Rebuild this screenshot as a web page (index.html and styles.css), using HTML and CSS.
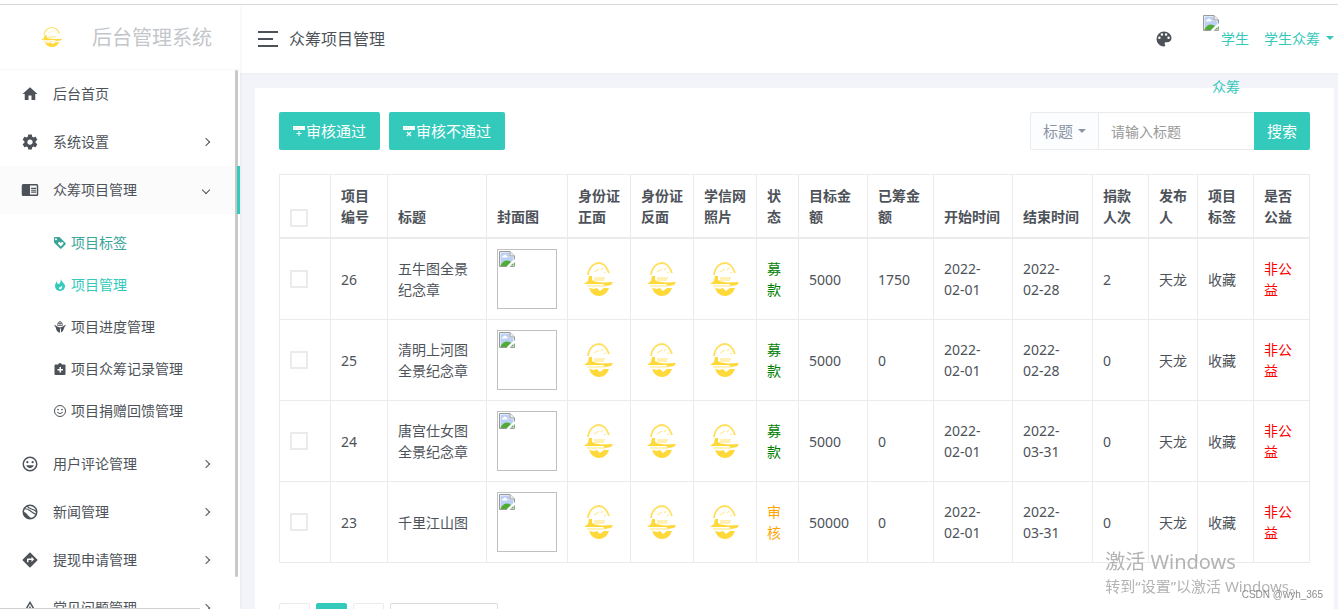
FILE: index.html
```html
<!DOCTYPE html>
<html lang="zh-CN">
<head>
<meta charset="utf-8">
<title>后台管理系统</title>
<link rel="stylesheet" href="styles.css">
</head>
<body>
<svg class="sprite" aria-hidden="true">
  <symbol id="i-home" viewBox="0 0 24 24"><path d="M10,20V14H14V20H19V12H22L12,3L2,12H5V20H10Z"/></symbol>
  <symbol id="i-cog" viewBox="0 0 24 24"><path d="M12,15.5A3.5,3.5 0 0,1 8.5,12A3.5,3.5 0 0,1 12,8.5A3.5,3.5 0 0,1 15.5,12A3.5,3.5 0 0,1 12,15.5M19.43,12.97C19.47,12.65 19.5,12.33 19.5,12C19.5,11.67 19.47,11.34 19.43,11L21.54,9.37C21.73,9.22 21.78,8.95 21.66,8.73L19.66,5.27C19.54,5.05 19.27,4.96 19.05,5.05L16.56,6.05C16.04,5.66 15.5,5.32 14.87,5.07L14.5,2.42C14.46,2.18 14.25,2 14,2H10C9.75,2 9.54,2.18 9.5,2.42L9.13,5.07C8.5,5.32 7.96,5.66 7.44,6.05L4.95,5.05C4.73,4.96 4.46,5.05 4.34,5.27L2.34,8.73C2.21,8.95 2.27,9.22 2.46,9.37L4.57,11C4.53,11.34 4.5,11.67 4.5,12C4.5,12.33 4.53,12.65 4.57,12.97L2.46,14.63C2.27,14.78 2.21,15.05 2.34,15.27L4.34,18.73C4.46,18.95 4.73,19.03 4.95,18.95L7.44,17.94C7.96,18.34 8.5,18.68 9.13,18.93L9.5,21.58C9.54,21.82 9.75,22 10,22H14C14.25,22 14.46,21.82 14.5,21.58L14.87,18.93C15.5,18.67 16.04,18.34 16.56,17.94L19.05,18.95C19.27,19.03 19.54,18.95 19.66,18.73L21.66,15.27C21.78,15.05 21.73,14.78 21.54,14.63L19.43,12.97Z"/></symbol>
  <symbol id="i-reader" viewBox="0 0 24 24"><path fill-rule="evenodd" d="M3,4H21A2,2 0 0,1 23,6V18A2,2 0 0,1 21,20H3A2,2 0 0,1 1,18V6A2,2 0 0,1 3,4M12,6V18H21V6H12M13.5,9H20V10.500H13.5V9M13.500,11.500H20V13H13.500V11.500M13.500,14H20V15.500H13.500V14"/></symbol>
  <symbol id="i-smile" viewBox="0 0 24 24"><circle cx="12" cy="12" r="9" fill="none" stroke="currentColor" stroke-width="2"/><circle cx="8.500" cy="9.500" r="1.500"/><circle cx="15.500" cy="9.500" r="1.500"/><path d="M7,13.800H17C16.200,16 14.300,17.500 12,17.500S7.800,16 7,13.800Z"/></symbol>
  <symbol id="i-smile-thin" viewBox="0 0 24 24"><circle cx="12" cy="12" r="11" fill="none" stroke="currentColor" stroke-width="2"/><circle cx="8" cy="9" r="1.700"/><circle cx="16" cy="9" r="1.700"/><path d="M6.500,14.500Q12,20 17.500,14.500" fill="none" stroke="currentColor" stroke-width="2"/></symbol>
  <symbol id="i-earth" viewBox="0 0 24 24"><circle cx="12" cy="12" r="9" fill="none" stroke="currentColor" stroke-width="2"/><path d="M4,8C10,6 12,12 20,15M8,4C11,9 16,7 21,12" fill="none" stroke="currentColor" stroke-width="1.500"/><path d="M3,12C7,11 9,18 14,20C8,22 3,18 3,12Z"/></symbol>
  <symbol id="i-direction" viewBox="0 0 24 24"><path d="M14,14.5V12H10V15H8V11A1,1 0 0,1 9,10H14V7.5L17.5,11M21.71,11.29L12.71,2.29H12.7C12.31,1.9 11.68,1.9 11.29,2.29L2.29,11.29C1.9,11.68 1.9,12.32 2.29,12.71L11.29,21.71C11.68,22.09 12.31,22.1 12.71,21.71L21.71,12.71C22.1,12.32 22.1,11.68 21.71,11.29Z"/></symbol>
  <symbol id="i-alert" viewBox="0 0 24 24"><path d="M12,4.500L21,20H3ZM12,10V15" fill="none" stroke="currentColor" stroke-width="2"/></symbol>
  <symbol id="i-tag" viewBox="0 0 24 24"><path fill-rule="evenodd" d="M2,0H11L23,12Q24,13.500 23,15L15,23Q13.500,24 12,23L0,11V2Q0,0 2,0M4,2.500A2,2 0 1,0 4,6.500A2,2 0 1,0 4,2.500M13.500,19L18.500,14Q20,11 17,10Q15,9.500 13.500,12Q12,9.500 10,10Q7,11 8.500,14Z"/></symbol>
  <symbol id="i-fire" viewBox="0 0 24 24"><path fill-rule="evenodd" d="M14,0Q15,4 18,7Q22,11 22,15Q21,23 12,24Q3,23 2,15Q2,9 6,4Q5.500,10 9,10Q13,10 14,0M12,21Q17,20 16.500,13Q14,16 11,16.500Q8,18 12,21"/></symbol>
  <symbol id="i-progress" viewBox="0 0 24 24"><path d="M7,9Q7,1 12,1T17,9M12,1V10M8,5H16M7,9H17" fill="none" stroke="currentColor" stroke-width="1.500"/><path d="M0,8Q5,8 6,11L12,13L18,11Q19,8 24,8Q20,12 20,15Q19,20 14,23V16L12,14V23.500Q5,22 4,15Q4,12 0,8Z"/></symbol>
  <symbol id="i-record" viewBox="0 0 24 24"><path fill-rule="evenodd" d="M3,3H8Q9,0 12,0T16,3H21Q23,3 23,5V22Q23,24 21,24H3Q1,24 1,22V5Q1,3 3,3M11,8V12H7V15H11V19H14V15H18V12H14V8Z"/></symbol>
  <symbol id="i-palette" viewBox="0 0 24 24"><path d="M17.5,12A1.5,1.5 0 0,1 16,10.5A1.5,1.5 0 0,1 17.5,9A1.5,1.5 0 0,1 19,10.5A1.5,1.5 0 0,1 17.5,12M14.5,8A1.5,1.5 0 0,1 13,6.5A1.5,1.5 0 0,1 14.5,5A1.5,1.5 0 0,1 16,6.5A1.5,1.5 0 0,1 14.5,8M9.5,8A1.5,1.5 0 0,1 8,6.5A1.5,1.5 0 0,1 9.5,5A1.5,1.5 0 0,1 11,6.5A1.5,1.5 0 0,1 9.5,8M6.5,12A1.5,1.5 0 0,1 5,10.5A1.5,1.5 0 0,1 6.5,9A1.5,1.5 0 0,1 8,10.5A1.5,1.5 0 0,1 6.5,12M12,3A9,9 0 0,0 3,12A9,9 0 0,0 12,21A1.5,1.5 0 0,0 13.5,19.5C13.5,19.11 13.35,18.76 13.11,18.5C12.88,18.23 12.73,17.88 12.73,17.5A1.5,1.5 0 0,1 14.23,16H16A5,5 0 0,0 21,11C21,6.58 16.97,3 12,3Z"/></symbol>
  <symbol id="i-pass" viewBox="0 0 12 12"><path d="M0,1H12V5H0ZM5.500,6H6.500V8H8.500V9H6.500V11H5.500V9H3.500V8H5.500Z"/><path d="M2,3H7" stroke="#33cabb" stroke-width="1" stroke-dasharray="1 1" opacity=".4"/></symbol>
  <symbol id="i-reject" viewBox="0 0 12 12"><path d="M0,1H12V5H0Z"/><path d="M2,3H7" stroke="#33cabb" stroke-width="1" stroke-dasharray="1 1" opacity=".4"/><path d="M4,7L8,11M8,7L4,11" stroke="currentColor" stroke-width="1.300"/></symbol>
  <symbol id="i-broken" viewBox="0 0 16 16"><path d="M.5,.5H11L15.500,5V15.500H.5Z" fill="#fff" stroke="#9a9a9a"/><path d="M1.500,1.500H10.500V6H14.500V9L8,14.500H1.500Z" fill="#bcd0f5"/><path d="M3,6Q3,4.500 4.500,4.500Q6,2.500 7.500,4.500Q9,5 8.500,6.500H3Z" fill="#fff"/><path d="M1.500,14.500Q4,9.500 8,9.500Q10.500,9.500 12,11L8,15H1.500Z" fill="#51ab35"/><path d="M11,.5V5H15.500" fill="#eee" stroke="#9a9a9a"/><path d="M16,8L7.500,16H10.500L16,11Z" fill="#fff"/><path d="M11.500,14.500H14.500V12Z" fill="#51ab35"/></symbol>
  <symbol id="i-emblem" viewBox="0 0 30 34" preserveAspectRatio="none"><g fill="none" stroke="#ffdf5c"><path d="M4,13C5,4 11,1 15,1S23,5 25,11" stroke-width="1.800"/><path d="M10,10L15,7M17,8L19,6M20,11L22,10" stroke-width="1.200" opacity=".6"/><path d="M10,16H21M10,18H20" stroke-width="1.500" opacity=".6"/><path d="M3,24H21" stroke-width="1.200" opacity=".7"/></g><g fill="#ffd83a"><path d="M5,14H8V18L11,19.500L18,20.500L29,20L27,23L21,24L19,22L0,22L4,19Z"/><path d="M5,26L10,27L13,26L16,29L20,26H25Q22,34 15,34Q8,34 5,26Z"/></g></symbol>
</svg>

<div class="app">
  <aside class="sidebar">
    <a class="brand" href="#"><svg class="brand-logo"><use href="#i-emblem"/></svg><span>后台管理系统</span></a>
    <nav class="nav">
      <a class="nav-item" href="#"><svg class="icon"><use href="#i-home"/></svg>后台首页</a>
      <a class="nav-item has-sub" href="#"><svg class="icon"><use href="#i-cog"/></svg>系统设置</a>
      <a class="nav-item has-sub open" href="#"><svg class="icon"><use href="#i-reader"/></svg>众筹项目管理</a>
      <div class="subnav">
        <a class="hovered" href="#"><svg class="icon-sm"><use href="#i-tag"/></svg>项目标签</a>
        <a class="current" href="#"><svg class="icon-sm"><use href="#i-fire"/></svg>项目管理</a>
        <a href="#"><svg class="icon-sm"><use href="#i-progress"/></svg>项目进度管理</a>
        <a href="#"><svg class="icon-sm"><use href="#i-record"/></svg>项目众筹记录管理</a>
        <a href="#"><svg class="icon-sm"><use href="#i-smile-thin"/></svg>项目捐赠回馈管理</a>
      </div>
      <a class="nav-item has-sub" href="#"><svg class="icon"><use href="#i-smile"/></svg>用户评论管理</a>
      <a class="nav-item has-sub" href="#"><svg class="icon"><use href="#i-earth"/></svg>新闻管理</a>
      <a class="nav-item has-sub" href="#"><svg class="icon"><use href="#i-direction"/></svg>提现申请管理</a>
      <a class="nav-item has-sub" href="#"><svg class="icon"><use href="#i-alert"/></svg>常见问题管理</a>
      <div class="scroll-thumb"></div>
    </nav>
  </aside>

  <div class="main">
    <header class="topbar">
      <button class="toggle" type="button" aria-label="菜单"><span></span><span></span><span></span></button>
      <h1>众筹项目管理</h1>
      <div class="tools">
        <button class="palette" type="button" aria-label="主题"><svg><use href="#i-palette"/></svg></button>
        <a class="avatar" href="#"><svg class="broken"><use href="#i-broken"/></svg>学生众筹</a>
        <a class="user" href="#">学生众筹<i class="caret"></i></a>
      </div>
    </header>

    <main class="content">
      <section class="card">
        <div class="actions">
          <button class="btn" type="button"><svg><use href="#i-pass"/></svg>审核通过</button>
          <button class="btn" type="button"><svg><use href="#i-reject"/></svg>审核不通过</button>
          <form class="search">
            <button class="field" type="button">标题<i class="caret"></i></button>
            <input type="text" placeholder="请输入标题" aria-label="请输入标题">
            <button class="btn go" type="button">搜索</button>
          </form>
        </div>

        <table class="grid">
          <colgroup><col class="w51"><col class="w57"><col class="w99"><col class="w81"><col class="w63"><col class="w63"><col class="w63"><col class="w42"><col class="w69"><col class="w66"><col class="w79"><col class="w80"><col class="w56"><col class="w49"><col class="w56"><col class="w56"></colgroup>
          <thead><tr><th><input type="checkbox" aria-label="全选"></th><th>项目编号</th><th>标题</th><th>封面图</th><th>身份证正面</th><th>身份证反面</th><th>学信网照片</th><th>状态</th><th>目标金额</th><th>已筹金额</th><th>开始时间</th><th>结束时间</th><th>捐款人次</th><th>发布人</th><th>项目标签</th><th>是否公益</th></tr></thead>
          <tbody>
            <tr><td><input type="checkbox" aria-label="选择 26"></td><td>26</td><td>五牛图全景纪念章</td><td><div class="cover"><svg class="broken"><use href="#i-broken"/></svg></div></td><td><svg class="emblem"><use href="#i-emblem"/></svg></td><td><svg class="emblem"><use href="#i-emblem"/></svg></td><td><svg class="emblem"><use href="#i-emblem"/></svg></td><td class="green">募款</td><td>5000</td><td>1750</td><td class="date">2022-02-01</td><td class="date">2022-02-28</td><td>2</td><td>天龙</td><td>收藏</td><td class="red">非公益</td></tr>
            <tr><td><input type="checkbox" aria-label="选择 25"></td><td>25</td><td>清明上河图全景纪念章</td><td><div class="cover"><svg class="broken"><use href="#i-broken"/></svg></div></td><td><svg class="emblem"><use href="#i-emblem"/></svg></td><td><svg class="emblem"><use href="#i-emblem"/></svg></td><td><svg class="emblem"><use href="#i-emblem"/></svg></td><td class="green">募款</td><td>5000</td><td>0</td><td class="date">2022-02-01</td><td class="date">2022-02-28</td><td>0</td><td>天龙</td><td>收藏</td><td class="red">非公益</td></tr>
            <tr><td><input type="checkbox" aria-label="选择 24"></td><td>24</td><td>唐宫仕女图全景纪念章</td><td><div class="cover"><svg class="broken"><use href="#i-broken"/></svg></div></td><td><svg class="emblem"><use href="#i-emblem"/></svg></td><td><svg class="emblem"><use href="#i-emblem"/></svg></td><td><svg class="emblem"><use href="#i-emblem"/></svg></td><td class="green">募款</td><td>5000</td><td>0</td><td class="date">2022-02-01</td><td class="date">2022-03-31</td><td>0</td><td>天龙</td><td>收藏</td><td class="red">非公益</td></tr>
            <tr><td><input type="checkbox" aria-label="选择 23"></td><td>23</td><td>千里江山图</td><td><div class="cover"><svg class="broken"><use href="#i-broken"/></svg></div></td><td><svg class="emblem"><use href="#i-emblem"/></svg></td><td><svg class="emblem"><use href="#i-emblem"/></svg></td><td><svg class="emblem"><use href="#i-emblem"/></svg></td><td class="orange">审核</td><td>50000</td><td>0</td><td class="date">2022-02-01</td><td class="date">2022-03-31</td><td>0</td><td>天龙</td><td>收藏</td><td class="red">非公益</td></tr>
          </tbody>
        </table>

        <div class="pager"><a href="#" aria-label="上一页"></a><a class="on" href="#" aria-label="当前页"></a><a href="#" aria-label="下一页"></a><span class="summary"></span></div>
      </section>
    </main>
  </div>
</div>

<div class="activate"><p class="big">激活 Windows</p><p>转到“设置”以激活 Windows。</p></div>
<div class="credit">CSDN @wyh_365</div>
<div class="status"></div>
</body>
</html>
```

FILE: styles.css
```css
* { box-sizing: border-box; }
body {
  margin: 0;
  height: 100vh;
  overflow: hidden;
  padding-top: 4px;
  background: #fff;
  color: #4d5259;
  font: 14px/21px "Noto Sans", "Noto Sans CJK SC", sans-serif;
}
a { color: inherit; text-decoration: none; }
button, input { font: inherit; color: inherit; margin: 0; }
button { border: 0; background: none; padding: 0; }
svg { fill: currentColor; display: block; flex: none; }
.sprite { position: absolute; width: 0; height: 0; }

.app { display: flex; height: 100%; border-top: 1px solid #dadada; background: #f3f4fa; }

.sidebar {
  width: 240px;
  flex: none;
  display: flex;
  flex-direction: column;
  background: #fff;
  box-shadow: 0 1px 4px rgba(0, 0, 0, .08);
  z-index: 2;
}
.brand {
  display: flex;
  align-items: center;
  gap: 29px;
  height: 65px;
  padding-left: 41px;
  border-bottom: 1px solid #f7f7f7;
  color: #c3c6ca;
  font-size: 20px;
}
.brand-logo { width: 22px; height: 20px; }
.nav { position: relative; flex: 1; min-height: 0; overflow: hidden; }
.nav-item {
  position: relative;
  display: flex;
  align-items: center;
  gap: 14px;
  height: 48px;
  padding: 0 31px 2px 21px;
}
.icon { width: 18px; height: 18px; margin-top: 2px; }
.has-sub::after {
  content: "";
  width: 5px;
  height: 5px;
  margin: 2px 0 0 auto;
  border: solid #4d5259;
  border-width: 1px 1px 0 0;
  transform: rotate(45deg);
}
.open { background: #fbfbfb; }
.open::after { transform: rotate(135deg); }
.open::before {
  content: "";
  position: absolute;
  z-index: 1;
  right: 0;
  top: 0;
  width: 3px;
  height: 100%;
  background: #33cabb;
}
.subnav { padding: 8px 0; }
.subnav a { display: flex; align-items: center; gap: 5px; height: 42px; padding: 0 0 2px 54px; }
.icon-sm { width: 12px; height: 12px; margin-top: 2px; }
.subnav .hovered { color: #3aa599; }
.subnav .current { color: #33cabb; }
.scroll-thumb {
  position: absolute;
  right: 2px;
  top: 0;
  width: 3px;
  height: 94%;
  border-radius: 2px;
  background: #c8c8c8;
}

.main { flex: 1; min-width: 0; display: flex; flex-direction: column; }
.topbar {
  display: flex;
  align-items: center;
  height: 68px;
  flex: none;
  padding: 0 4px 0 18px;
  background: #fff;
  box-shadow: 0 1px 2px rgba(0, 0, 0, .03);
  z-index: 1;
}
.toggle { display: grid; gap: 5px; width: 20px; margin-right: 11px; }
.toggle span { height: 2px; background: #4d5259; }
.toggle span:nth-child(2) { width: 15px; }
h1 { margin: 0; font-size: 16px; font-weight: 400; line-height: 24px; }
.tools { display: flex; align-items: center; margin-left: auto; color: #33cabb; }
.palette { margin-right: 28px; color: #4d5259; }
.palette svg { width: 20px; height: 20px; }
.avatar { width: 48px; height: 48px; line-height: 48px; text-align: center; margin-right: 14px; }
.broken { width: 16px; height: 16px; }
.avatar .broken { display: inline-block; vertical-align: top; margin-right: 2px; }
.user { display: flex; align-items: center; gap: 6px; padding-bottom: 2px; }
.caret { border: 4px solid transparent; border-top-color: currentColor; border-bottom: 0; }

.content { flex: 1; min-height: 0; padding: 15px 4px 0 15px; }
.card { height: 100%; padding: 24px; background: #fff; overflow: hidden; }
.actions { display: flex; gap: 9px; margin-bottom: 24px; }
.btn {
  display: flex;
  align-items: center;
  gap: 1px;
  height: 38px;
  padding: 0 14px;
  border-radius: 2px;
  background: #33cabb;
  color: #fff;
  font-size: 15px;
}
.btn svg { width: 12px; height: 12px; }
.search { display: flex; margin-left: auto; }
.field {
  display: flex;
  align-items: center;
  gap: 5px;
  padding: 0 12px;
  border: 1px solid #ebebeb;
  border-radius: 2px 0 0 2px;
  background: #fcfdfe;
  color: #8b95a5;
  font-size: 15px;
}
.search input { width: 155px; padding: 0 12px; border: solid #ebebeb; border-width: 1px 0; outline: 0; border-radius: 0; }
.search input::placeholder { color: #999; }
.go { padding: 0 13px; border-radius: 0 2px 2px 0; }

.grid { width: 100%; table-layout: fixed; border-collapse: collapse; }
.grid th, .grid td { padding: 10px; border: 1px solid #ebebeb; text-align: left; vertical-align: middle; }
.grid th { vertical-align: bottom; border-bottom-width: 2px; font-weight: 700; }
.grid .date { padding-right: 16px; }
.grid input {
  display: block;
  appearance: none;
  width: 18px;
  height: 18px;
  border: 2px solid #ebebeb;
  background: #fff;
}
.w42 { width: 42px; }
.w49 { width: 49px; }
.w51 { width: 51px; }
.w56 { width: 56px; }
.w57 { width: 57px; }
.w63 { width: 63px; }
.w66 { width: 66px; }
.w69 { width: 69px; }
.w79 { width: 79px; }
.w80 { width: 80px; }
.w81 { width: 81px; }
.w99 { width: 99px; }
.cover { width: 60px; height: 60px; padding: 1px; border: 1px solid #c0c0c0; }
.emblem { width: 30px; height: 34px; margin: 0 auto; }
.green { color: #008000; }
.orange { color: #ffa500; }
.red { color: #f00; }

.pager { display: flex; gap: 6px; margin-top: 40px; }
.pager a, .summary { width: 31px; height: 31px; border: 1px solid #ebebeb; border-radius: 2px; }
.pager .on { background: #33cabb; border-color: #33cabb; }
.summary { width: 108px; border-color: #dcdcdc; }

.activate { position: fixed; right: 34px; bottom: 12px; z-index: 3; color: #b3b3b3; font-size: 15px; }
.activate p { margin: 0; }
.activate .big { font-size: 20px; line-height: 28px; }
.credit { position: fixed; right: 15px; bottom: 4px; z-index: 3; color: #8c8c8c; font: 10px/20px "Liberation Sans", sans-serif; }
.status { position: fixed; left: 0; bottom: 0; z-index: 3; width: 200px; height: 1px; background: #d0d0d0; }
```
